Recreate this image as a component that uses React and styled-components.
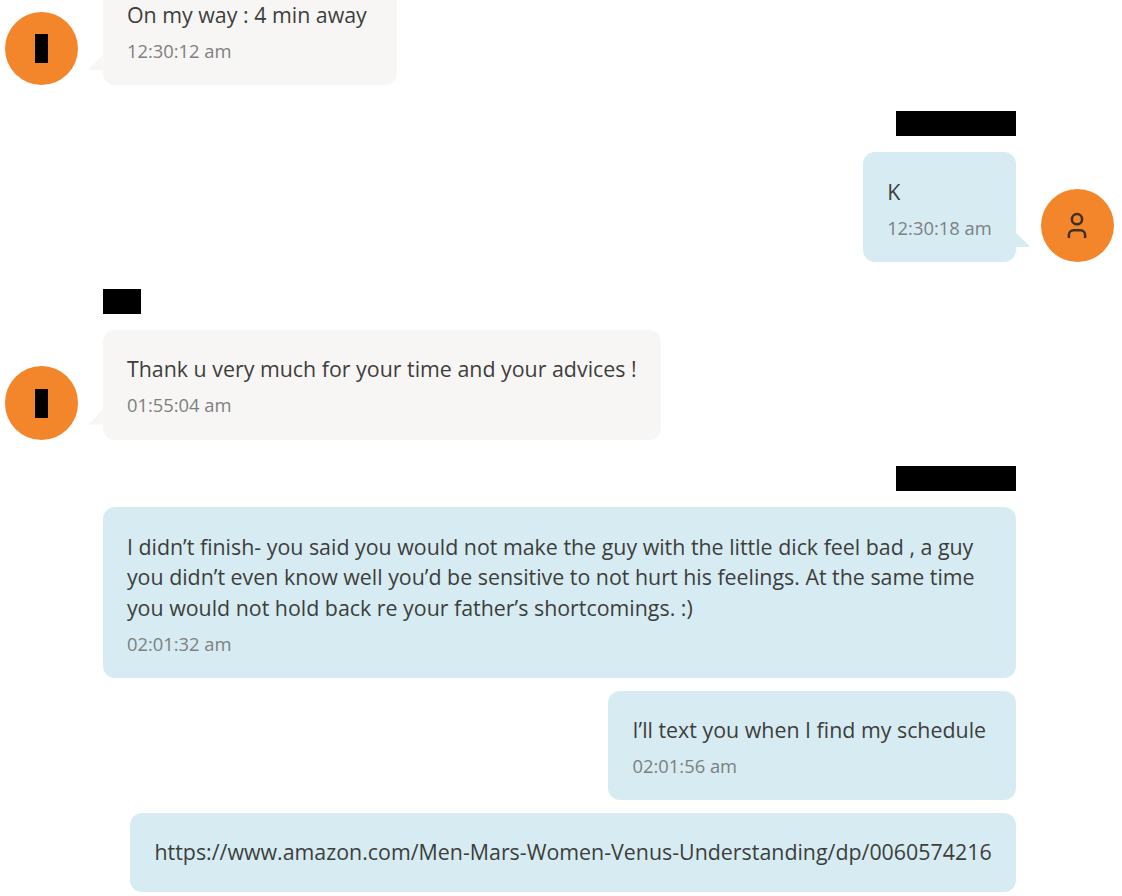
import styled, { createGlobalStyle } from 'styled-components';

const GlobalStyle = createGlobalStyle`
	body {
		margin: 0;
		background: #fff;
		font-family: 'Open Sans', 'Noto Sans', sans-serif;
	}
`

const Thread = styled.main`
	box-sizing: border-box;
	width: 1122px;
	height: 896px;
	padding: 0 8.2px 0 4.8px;
	overflow: hidden;
`

const Group = styled.section`
	display: flex;
	flex-direction: ${({mine}) => mine ? 'row' : 'row-reverse'};
	justify-content: flex-end;
	align-items: flex-end;
	gap: 24.6px;

	&:first-child {
		margin-top: -24.9px;
	}
`

const Messages = styled.div`
	display: flex;
	flex-direction: column;
	align-items: ${({mine}) => mine ? 'flex-end' : 'flex-start'};
	gap: 12.6px;
	margin-right: ${({indented}) => indented ? '97.8px' : '0'};
`

const Sender = styled.div`
	width: ${({size}) => size}px;
	height: 25px;
	margin: 26.5px 0 3.5px;
	background: #000;
`

const Bubble = styled.article`
	position: relative;
	box-sizing: border-box;
	max-width: 913.5px;
	padding: 24.4px;
	border-radius: 12px;
	background: ${({mine}) => mine ? '#d6ecf2' : '#f7f6f5'};
`

const Tail = styled.span`
	position: absolute;
	bottom: 15px;
	${({mine}) => mine ? 'left: 100%' : 'right: 100%'};
	width: 14.6px;
	height: 14.6px;
	background: ${({mine}) => mine ? '#d6ecf2' : '#f7f6f5'};
	clip-path: ${({mine}) => mine
		? 'polygon(0 0, 100% 100%, 0 100%)'
		: 'polygon(100% 0, 100% 100%, 0 100%)'};
`

const Text = styled.p`
	margin: 0;
	font-size: 21.38px;
	line-height: 30.5px;
	color: #3d3e3c;
	white-space: break-spaces;
`

const Time = styled.time`
	display: block;
	margin-top: 10.7px;
	font-size: 18.35px;
	line-height: 19.8px;
	color: #7d807f;
	white-space: nowrap;
`

const Avatar = styled.div`
	display: flex;
	flex: none;
	align-items: center;
	justify-content: center;
	width: 73.2px;
	height: 73.2px;
	border-radius: 50%;
	background: #f3862b;
`

const Initial = styled.span`
	width: 13.4px;
	height: 29px;
	background: #000;
`

const PersonIcon = () => (
	<svg width="28" height="28" viewBox="0 0 28 28" fill="none" stroke="#3d3024" strokeWidth="2.5">
		<circle cx="14" cy="7.2" r="5.1" />
		<path d="M5.9 26v-3.2a4.6 4.6 0 0 1 4.6-4.6h7a4.6 4.6 0 0 1 4.6 4.6V26" />
	</svg>
)

const groups = [
	{
		avatar: true,
		messages: [{ text: 'On my way : 4 min away ', time: '12:30:12 am' }],
	},
	{
		mine: true,
		avatar: true,
		sender: 120,
		messages: [{ text: 'K', time: '12:30:18 am' }],
	},
	{
		avatar: true,
		sender: 38,
		messages: [{ text: 'Thank u very much for your time and your advices !', time: '01:55:04 am' }],
	},
	{
		mine: true,
		sender: 120,
		messages: [
			{
				text: 'I didn’t finish- you said you would not make the guy with the little dick feel bad , a guy you didn’t even know well you’d be sensitive to not hurt his feelings. At the same time you would not hold back re your father’s shortcomings. :)',
				time: '02:01:32 am',
			},
			{ text: 'I’ll text you when I find my schedule ', time: '02:01:56 am' },
			{ text: 'https://www.amazon.com/Men-Mars-Women-Venus-Understanding/dp/0060574216' },
		],
	},
]

const MessageGroup = ({mine, avatar, sender, messages}) => (
	<Group mine={mine}>
		<Messages mine={mine} indented={mine && !avatar}>
			{sender && <Sender size={sender} />}
			{messages.map(({text, time}) => (
				<Bubble key={text} mine={mine}>
					<Text>{text}</Text>
					{time && <Time>{time}</Time>}
					{avatar && <Tail mine={mine} />}
				</Bubble>
			))}
		</Messages>
		{avatar && (
			<Avatar>{mine ? <PersonIcon /> : <Initial />}</Avatar>
		)}
	</Group>
)

const App = () => (
	<>
		<GlobalStyle />
		<Thread>
			{groups.map((group, i) => <MessageGroup key={i} {...group} />)}
		</Thread>
	</>
)

export default App;
